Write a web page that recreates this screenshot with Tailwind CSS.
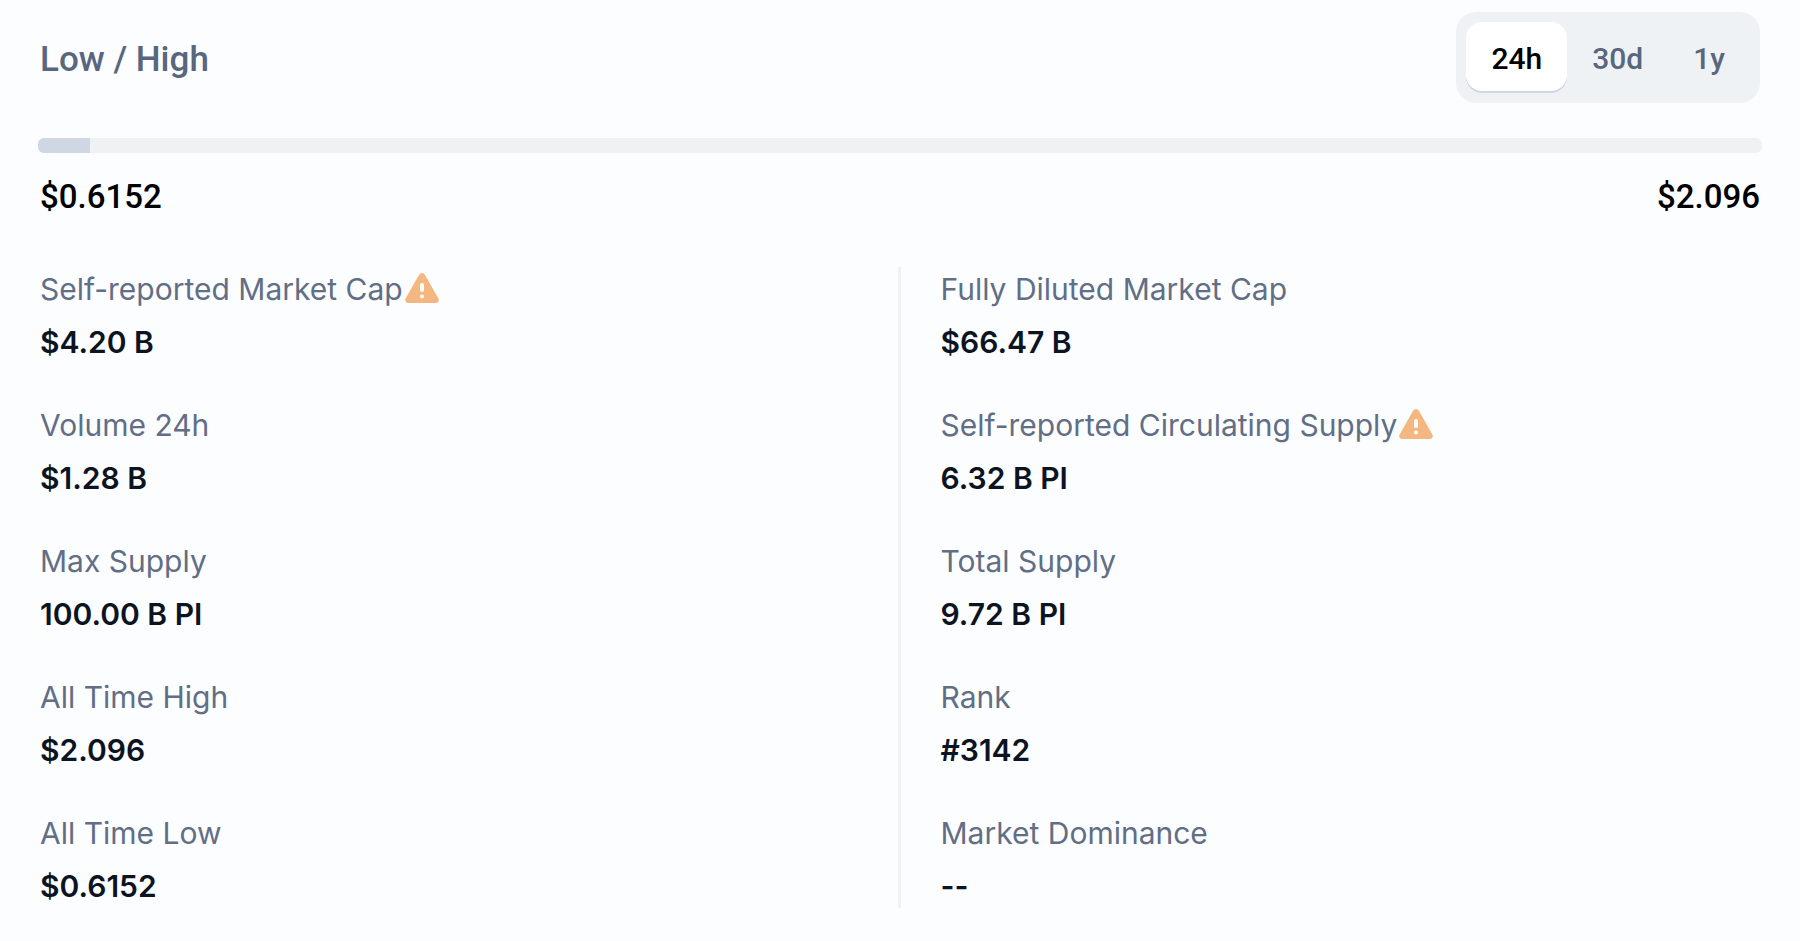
<!DOCTYPE html>
<html lang="en">

<head>
  <meta charset="UTF-8">
  <meta name="viewport" content="width=device-width, initial-scale=1.0">
  <script src="https://cdn.jsdelivr.net/npm/@tailwindcss/browser@4"></script>

  <title>Pi - Statistics</title>
</head>

<body class="bg-[#fcfdff]">
  <main class="px-10 pt-3 pb-8">

    <!-- low / high -->
    <section class="font-[Roboto,sans-serif] font-medium">
      <div class="flex items-center justify-between">
        <h2 class="pt-1 text-[35px] leading-[44px] text-[#58667e]">Low / High</h2>
        <div class="flex rounded-[20px] bg-[#eff2f5] px-[10px] pt-[10px] pb-3 text-[30px] leading-[44px] text-[#58667e]">
          <button type="button" class="rounded-2xl bg-white px-[25px] pt-[15px] pb-[10px] text-black shadow-[0_2px_0_#cfd6e4]">24h</button>
          <button type="button" class="px-[25px] pt-[15px] pb-[10px]">30d</button>
          <button type="button" class="px-[25px] pt-[15px] pb-[10px]">1y</button>
        </div>
      </div>

      <div class="-mx-[2px] mt-[35px] h-[15px] overflow-hidden rounded-md bg-[#eff2f5]">
        <div class="h-full bg-[#cfd6e4]" style="width: 3%"></div>
      </div>

      <div class="mt-[22px] flex justify-between text-[33px] leading-[44px] text-black">
        <span>$0.6152</span>
        <span>$2.096</span>
      </div>
    </section>

    <!-- stats -->
    <section class="mt-12 flex font-[Inter,sans-serif] text-[30px] leading-[44px]">
      <dl class="flex flex-1 flex-col gap-[39px]">
        <div>
          <dt class="flex items-center gap-[2px] font-normal text-[#616e85]">
            Self-reported Market Cap
            <svg class="mb-[2px] h-[30px] w-[34px]" viewBox="0 0 34 30" aria-hidden="true">
              <path fill="#f4b780" d="M14.1 1.7a3.4 3.4 0 0 1 5.8 0L33.4 25.500a3 3 0 0 1-2.600 4.500H3.200a3 3 0 0 1-2.600-4.500z" />
              <path stroke="#fff" stroke-width="4" stroke-linecap="round" d="M17 12v5M17 23.500v.1" />
            </svg>
          </dt>
          <dd class="mt-[9px] font-semibold text-[#0d1421]">$4.20 B</dd>
        </div>
        <div>
          <dt class="font-normal text-[#616e85]">Volume 24h</dt>
          <dd class="mt-[9px] font-semibold text-[#0d1421]">$1.28 B</dd>
        </div>
        <div>
          <dt class="font-normal text-[#616e85]">Max Supply</dt>
          <dd class="mt-[9px] font-semibold text-[#0d1421]">100.00 B PI</dd>
        </div>
        <div>
          <dt class="font-normal text-[#616e85]">All Time High</dt>
          <dd class="mt-[9px] font-semibold text-[#0d1421]">$2.096</dd>
        </div>
        <div>
          <dt class="font-normal text-[#616e85]">All Time Low</dt>
          <dd class="mt-[9px] font-semibold text-[#0d1421]">$0.6152</dd>
        </div>
      </dl>

      <div class="mr-10 ml-[38px] w-[3px] bg-[#eff2f5]"></div>

      <dl class="flex flex-1 flex-col gap-[39px]">
        <div>
          <dt class="font-normal text-[#616e85]">Fully Diluted Market Cap</dt>
          <dd class="mt-[9px] font-semibold text-[#0d1421]">$66.47 B</dd>
        </div>
        <div>
          <dt class="flex items-center gap-[2px] font-normal text-[#616e85]">
            Self-reported Circulating Supply
            <svg class="mb-[2px] h-[30px] w-[34px]" viewBox="0 0 34 30" aria-hidden="true">
              <path fill="#f4b780" d="M14.1 1.7a3.4 3.4 0 0 1 5.8 0L33.4 25.500a3 3 0 0 1-2.600 4.500H3.200a3 3 0 0 1-2.600-4.500z" />
              <path stroke="#fff" stroke-width="4" stroke-linecap="round" d="M17 12v5M17 23.500v.1" />
            </svg>
          </dt>
          <dd class="mt-[9px] font-semibold text-[#0d1421]">6.32 B PI</dd>
        </div>
        <div>
          <dt class="font-normal text-[#616e85]">Total Supply</dt>
          <dd class="mt-[9px] font-semibold text-[#0d1421]">9.72 B PI</dd>
        </div>
        <div>
          <dt class="font-normal text-[#616e85]">Rank</dt>
          <dd class="mt-[9px] font-semibold text-[#0d1421]">#3142</dd>
        </div>
        <div>
          <dt class="font-normal text-[#616e85]">Market Dominance</dt>
          <dd class="mt-[9px] font-semibold text-[#0d1421]">--</dd>
        </div>
      </dl>
    </section>

  </main>
</body>

</html>
